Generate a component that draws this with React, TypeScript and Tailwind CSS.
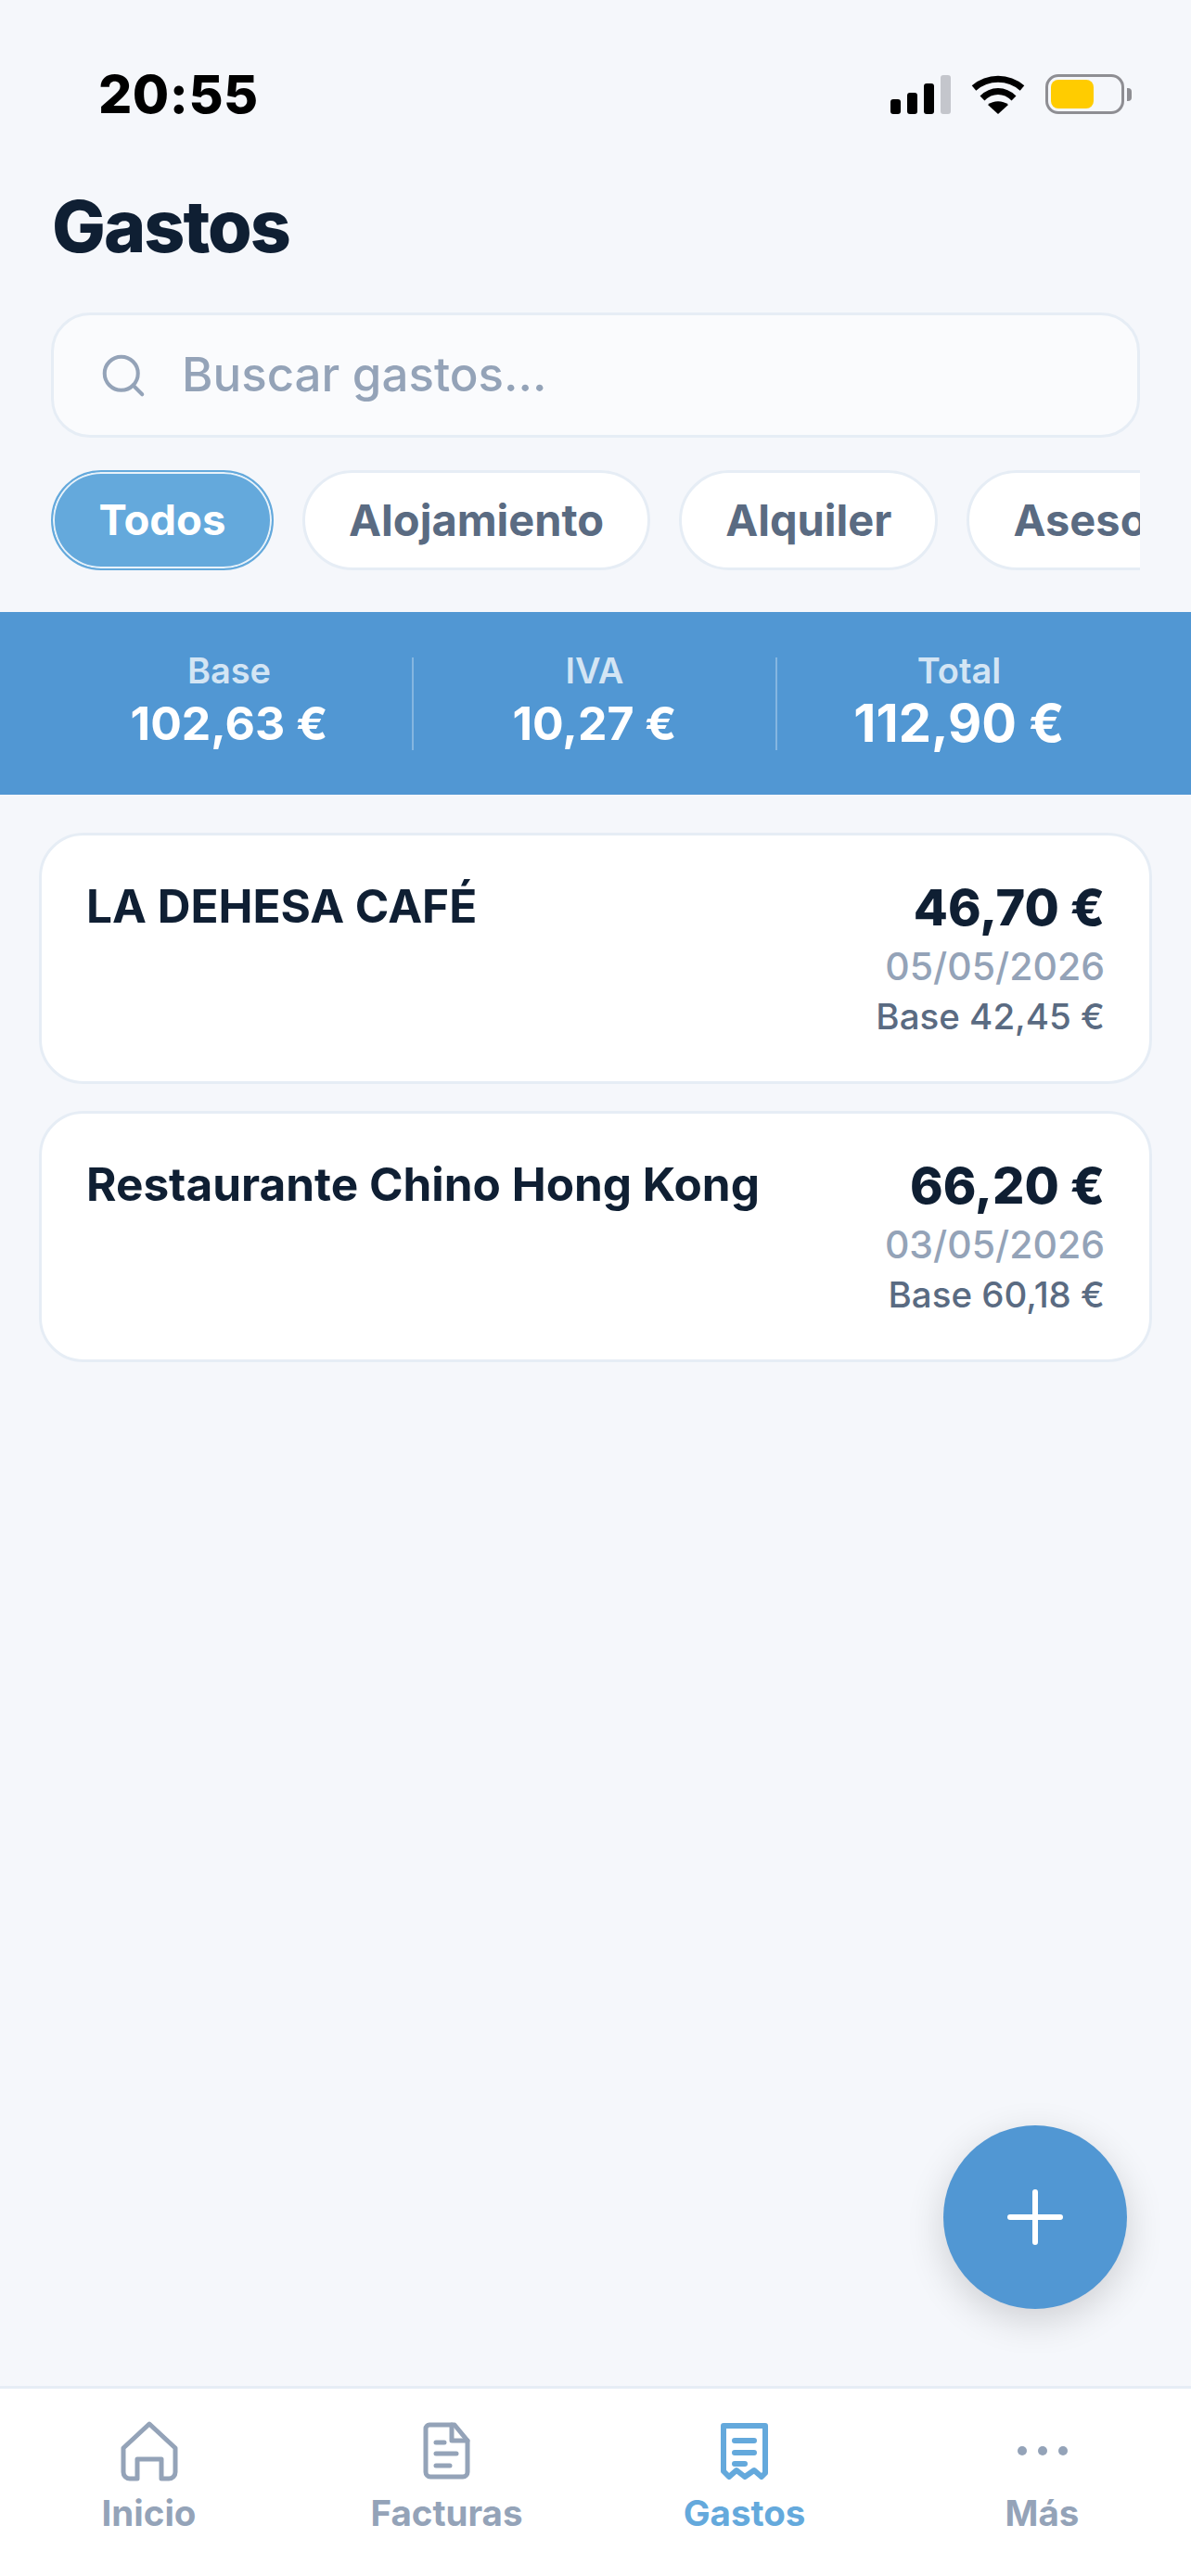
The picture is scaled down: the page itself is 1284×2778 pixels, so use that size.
import React from 'react';
import { Search } from 'lucide-react';

const font = "font-['Inter','Liberation_Sans',sans-serif]";

const chips = ['Alojamiento', 'Alquiler', 'Asesoría'];

const expenses = [
  { name: 'LA DEHESA CAFÉ', total: '46,70 €', date: '05/05/2026', base: 'Base 42,45 €' },
  { name: 'Restaurante Chino Hong Kong', total: '66,20 €', date: '03/05/2026', base: 'Base 60,18 €' },
];

function StatusBar() {
  return (
    <div className="flex h-[204px] items-start justify-between pt-[72px] pl-[106px] pr-[64px]">
      <span className="text-[57px] leading-[60px] font-extrabold text-black tracking-[0.5px]">20:55</span>
      <div className="mt-[8px] flex items-center gap-[22px]">
        <div className="flex items-end gap-[7px]">
          <div className="h-[16px] w-[11px] rounded-[3px] bg-black" />
          <div className="h-[23px] w-[11px] rounded-[3px] bg-black" />
          <div className="h-[33px] w-[11px] rounded-[3px] bg-black" />
          <div className="h-[42px] w-[11px] rounded-[3px] bg-[#c4c6cc]" />
        </div>
        <svg width="58" height="42" viewBox="0 0 58 42" fill="none">
          <path d="M3 14 C18 1 40 1 55 14" stroke="black" strokeWidth="7" />
          <path d="M12 25 C22 15 36 15 46 25" stroke="black" strokeWidth="7" />
          <path d="M29 42 L18 32 C24 27 34 27 40 32 Z" fill="black" />
        </svg>
        <div className="flex items-center gap-[3px]">
          <div className="flex h-[43px] w-[85px] items-center rounded-[14px] border-[3px] border-[#8e8e93] p-[3px]">
            <div className="h-full w-[46px] rounded-[8px] bg-[#ffcc00]" />
          </div>
          <div className="h-[14px] w-[5px] rounded-r-[4px] bg-[#8e8e93]" />
        </div>
      </div>
    </div>
  );
}

function Summary({ label, value, big }: { label: string; value: string; big?: boolean }) {
  return (
    <div className="flex flex-col items-center">
      <span className="text-[38px] leading-[38px] font-semibold text-white/75">{label}</span>
      <span className={big ? 'mt-[5px] text-[56px] leading-[66px] font-bold text-white' : 'mt-[5px] text-[50px] leading-[66px] font-bold text-white'}>{value}</span>
    </div>
  );
}

function NavItem({ label, active, children }: { label: string; active?: boolean; children: React.ReactNode }) {
  return (
    <div className="flex flex-col items-center">
      <div className="flex h-[66px] items-center justify-center">{children}</div>
      <span className={active ? 'mt-[12px] text-[38.5px] leading-[44px] font-bold text-[#64a9dc]' : 'mt-[12px] text-[38.5px] leading-[44px] font-bold text-[#94a3b8]'}>{label}</span>
    </div>
  );
}

export default function App() {
  return (
    <div className={`${font} relative flex min-h-[2778px] flex-col bg-[#f5f7fb]`}>
      <StatusBar />

      <h1 className="ml-[56px] text-[77px] leading-[80px] font-extrabold tracking-[-2px] text-[#0f1f33]">Gastos</h1>

      {/* Search */}
      <div className="mx-[55px] mt-[53px] flex h-[135px] items-center rounded-[42px] border-[3px] border-[#e6edf5] bg-[#fafbfd] pl-[48px]">
        <Search className="h-[54px] w-[54px] text-[#94a3b8]" strokeWidth={1.8} />
        <span className="ml-[36px] text-[51px] font-medium text-[#94a3b8]">Buscar gastos...</span>
      </div>

      {/* Filters */}
      <div className="mx-[55px] mt-[35px] flex gap-[31px] overflow-hidden">
        <div className="flex h-[108px] w-[240px] shrink-0 items-center justify-center rounded-full border-[2px] border-[#64a9dc] bg-[#64a9dc] text-[45.5px] font-bold text-white shadow-[inset_0_0_0_2px_rgba(255,255,255,0.85)]">
          Todos
        </div>
        {chips.map((chip) => (
          <div key={chip} className="flex h-[108px] shrink-0 items-center justify-center rounded-full border-[3px] border-[#e6edf5] bg-white px-[47px] text-[47px] font-bold text-[#5a6b82]">
            {chip}
          </div>
        ))}
      </div>

      {/* Totals band */}
      <div className="mt-[45px] grid h-[197px] grid-cols-[396px_392px_392px] items-center bg-[#5197d3] pr-[54px] pl-[50px]">
        <div className="flex h-[100px] items-center justify-center border-r-[2px] border-white/30"><Summary label="Base" value="102,63 €" /></div>
        <div className="flex h-[100px] items-center justify-center border-r-[2px] border-white/30"><Summary label="IVA" value="10,27 €" /></div>
        <div className="flex h-[100px] items-center justify-center"><Summary label="Total" value="112,90 €" big /></div>
      </div>

      {/* Expense list */}
      <main className="mx-[42px] mt-[41px] flex flex-1 flex-col gap-[29px]">
        {expenses.map((e) => (
          <div key={e.date} className="flex h-[271px] justify-between rounded-[48px] border-[3px] border-[#e6edf5] bg-white pt-[48px] pr-[48px] pl-[48px]">
            <span className="text-[49.5px] leading-[56px] font-[750] text-[#0f1f33]">{e.name}</span>
            <div className="flex flex-col items-end">
              <span className="text-[54px] leading-[60px] font-extrabold text-[#0f1f33]">{e.total}</span>
              <span className="mt-[7px] text-[41px] leading-[52px] font-medium text-[#94a3b8]">{e.date}</span>
              <span className="mt-[2px] text-[38.5px] leading-[52px] font-medium text-[#5a6b82]">{e.base}</span>
            </div>
          </div>
        ))}
      </main>

      {/* Add button */}
      <div className="absolute top-[2292px] left-[1017px] flex h-[198px] w-[198px] items-center justify-center rounded-full bg-[#5197d3] shadow-[0_12px_40px_rgba(0,0,0,0.16)]">
        <svg width="60" height="60" viewBox="0 0 60 60" fill="none" stroke="white" strokeWidth="6" strokeLinecap="round">
          <path d="M30 3 V57 M3 30 H57" />
        </svg>
      </div>

      {/* Bottom nav */}
      <nav className="grid h-[205px] grid-cols-4 border-t-[3px] border-[#e6edf5] bg-white pt-[34px]">
        <NavItem label="Inicio">
          <svg width="62" height="65" viewBox="0 0 62 65" fill="none" stroke="#94a3b8" strokeWidth="5" strokeLinejoin="round">
            <path d="M18 62 H10 a7 7 0 0 1 -7 -7 V29 L31 3 L59 29 V55 a7 7 0 0 1 -7 7 H44 V41 H18 Z" />
          </svg>
        </NavItem>
        <NavItem label="Facturas">
          <svg width="51" height="62" viewBox="0 0 51 62" fill="none" stroke="#94a3b8" strokeWidth="5" strokeLinejoin="round" strokeLinecap="round">
            <path d="M7 3 H34 L48 20 V54 a5 5 0 0 1 -5 5 H8 a5 5 0 0 1 -5 -5 V7 a4 4 0 0 1 4 -4 Z" />
            <path d="M31 3 V20 H48" />
            <path d="M14 22 H23 M14 34 H36 M14 47 H29" />
          </svg>
        </NavItem>
        <NavItem label="Gastos" active>
          <svg width="51" height="61" viewBox="0 0 51 61" fill="none" stroke="#64a9dc" strokeWidth="6" strokeLinejoin="round" strokeLinecap="round">
            <path d="M3 3 H48 V54 L44 58 L36 51 L26 58 L17 51 L9 58 L3 52 Z" />
            <path d="M15 19 H36 M15 32 H36 M15 44 H26" />
          </svg>
        </NavItem>
        <NavItem label="Más">
          <div className="flex gap-[12px]">
            <div className="h-[10px] w-[10px] rounded-full bg-[#94a3b8]" />
            <div className="h-[10px] w-[10px] rounded-full bg-[#94a3b8]" />
            <div className="h-[10px] w-[10px] rounded-full bg-[#94a3b8]" />
          </div>
        </NavItem>
      </nav>
    </div>
  );
}
